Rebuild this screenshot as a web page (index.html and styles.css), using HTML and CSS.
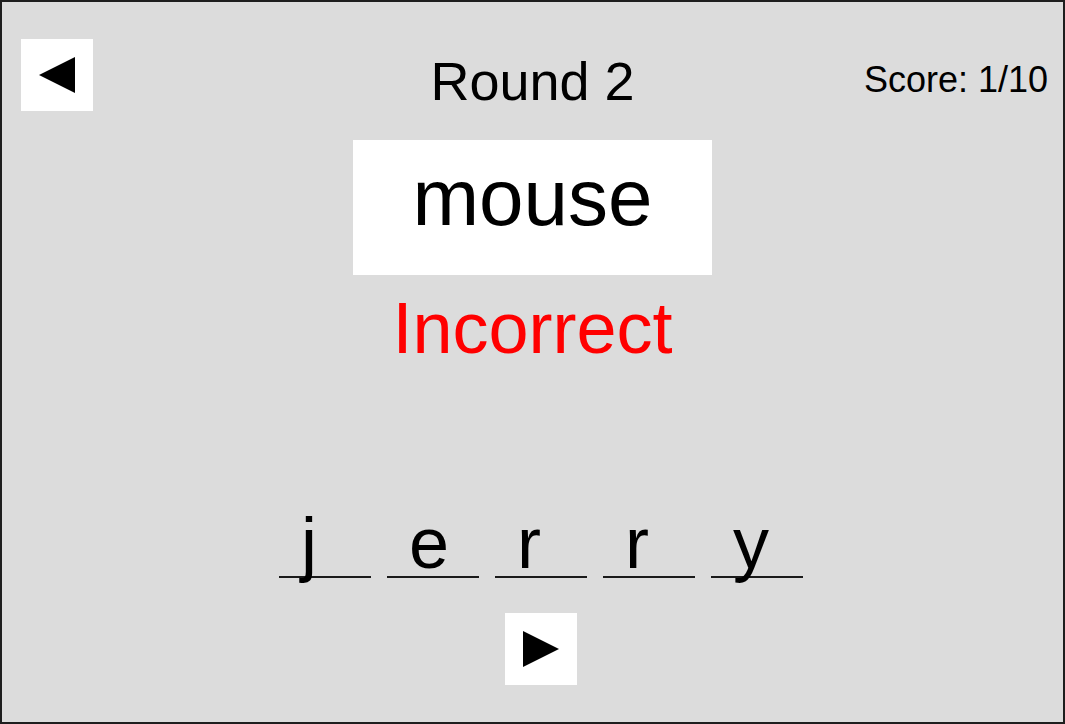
FILE: index.html
```html
<!DOCTYPE html>
<html lang="en">
<head>
<meta charset="utf-8">
<title>Round 2</title>
<link rel="stylesheet" href="styles.css">
</head>
<body>
<div class="frame">
  <header class="top-bar">
    <button class="icon-btn back-btn" aria-label="Back">
      <svg width="72" height="72" viewBox="0 0 72 72"><polygon points="18,36 54,18 54,54" fill="#000"/></svg>
    </button>
    <h1 class="round-title">Round 2</h1>
    <div class="score">Score: 1/10</div>
  </header>

  <div class="word-card">mouse</div>
  <div class="feedback">Incorrect</div>

  <div class="answer-area">
    <div class="slots">
      <span class="slot">j</span>
      <span class="slot">e</span>
      <span class="slot">r</span>
      <span class="slot">r</span>
      <span class="slot">y</span>
    </div>
    <button class="icon-btn next-btn" aria-label="Next">
      <svg width="72" height="72" viewBox="0 0 72 72"><polygon points="18,18 54,36 18,54" fill="#000"/></svg>
    </button>
  </div>
</div>
</body>
</html>
```

FILE: styles.css
```css
html, body {
  margin: 0;
  padding: 0;
}

body {
  font-family: "Liberation Sans", Arial, sans-serif;
  color: #000;
  background: #dcdcdc;
}

.frame {
  width: 1065px;
  height: 724px;
  box-sizing: border-box;
  border: 2px solid #1e1e1e;
  background: #dcdcdc;
  display: flex;
  flex-direction: column;
  align-items: center;
  overflow: hidden;
}

.top-bar {
  width: 100%;
  display: grid;
  grid-template-columns: 1fr auto 1fr;
  align-items: start;
  padding-top: 37px;
}

.icon-btn {
  width: 72px;
  height: 72px;
  padding: 0;
  margin: 0;
  border: none;
  background: #fff;
  display: block;
  cursor: pointer;
}

.icon-btn svg {
  display: block;
}

.back-btn {
  justify-self: start;
  margin-left: 19px;
}

.round-title {
  margin: 13px 0 0;
  font-size: 54px;
  line-height: 59px;
  font-weight: normal;
}

.score {
  justify-self: end;
  margin-top: 21px;
  padding-right: 15px;
  font-size: 36px;
  line-height: 40px;
}

.word-card {
  margin-top: 29px;
  width: 359px;
  height: 135px;
  box-sizing: border-box;
  padding-top: 12px;
  background: #fff;
  text-align: center;
  font-size: 80px;
  line-height: 92px;
}

.feedback {
  margin-top: 12px;
  color: #ff0000;
  font-size: 72px;
  line-height: 82px;
}

.answer-area {
  margin-top: 133px;
  padding-left: 17px;
  display: flex;
  flex-direction: column;
  align-items: center;
}

.slots {
  display: flex;
  gap: 16px;
}

.slot {
  width: 70px;
  height: 74px;
  padding-left: 22px;
  border-bottom: 2px solid #1a1a1a;
  font-size: 72px;
  line-height: 82px;
}

.next-btn {
  margin-top: 35px;
}
```
